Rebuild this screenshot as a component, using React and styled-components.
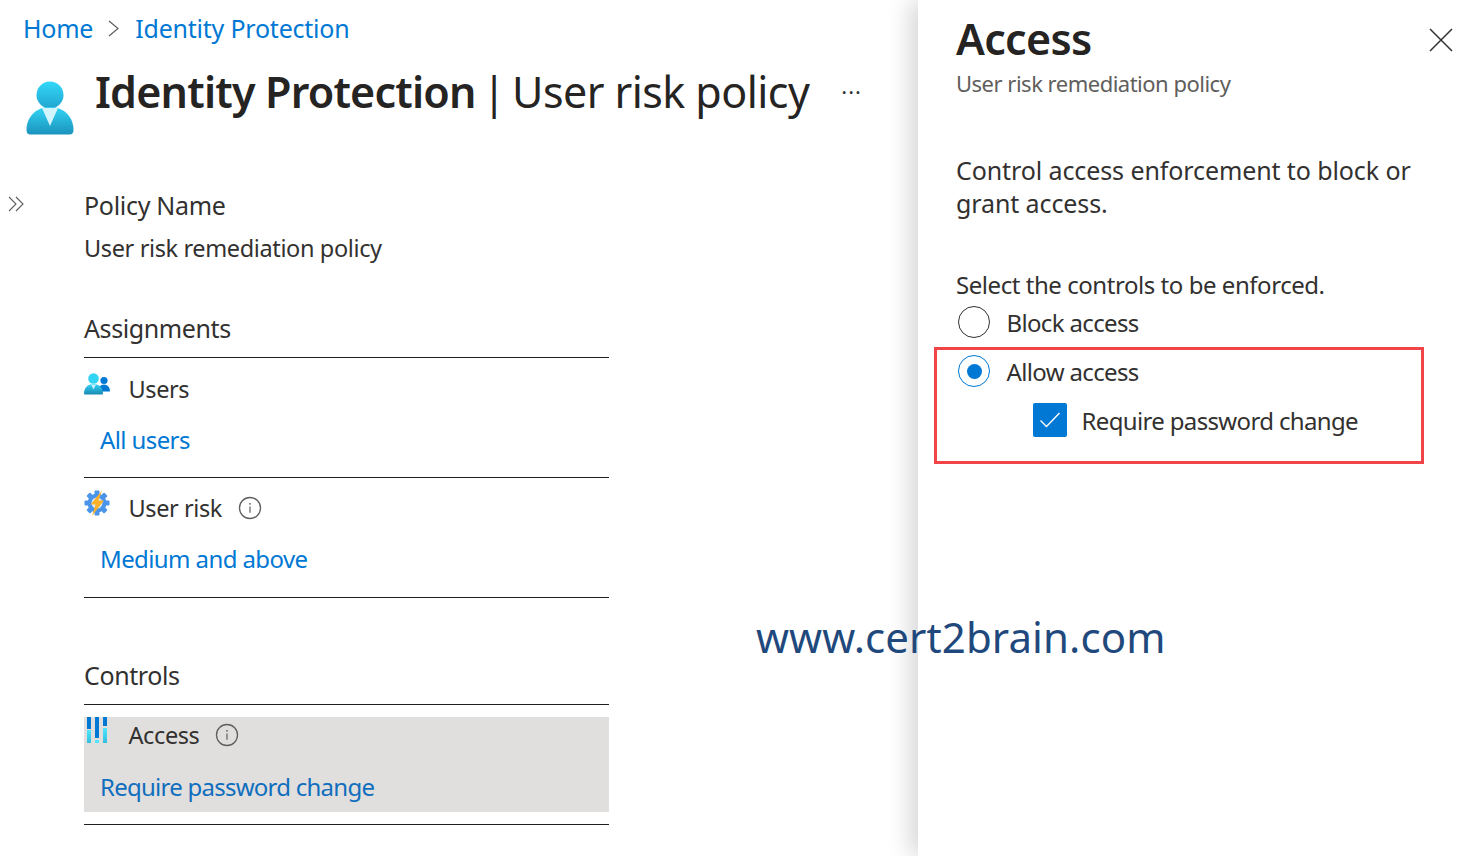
import React from 'react'
import styled, { createGlobalStyle } from 'styled-components'

const Global = createGlobalStyle`
  html, body {
    margin: 0;
    padding: 0;
    height: 100%;
    overflow: hidden;
    background: #fff;
    font-family: "Noto Sans", "Open Sans", sans-serif;
    color: #323130;
  }
`

const Page = styled.div`
  position: relative;
  display: flex;
  width: 1479px;
  height: 856px;
  overflow: hidden;
`

const Main = styled.div`
  width: 918px;
  flex: none;
  padding-top: 11px;
  box-sizing: border-box;
`

const Crumbs = styled.nav`
  display: flex;
  align-items: center;
  height: 34px;
  padding-left: 23px;
  gap: 14px;
`

const Crumb = styled.span`
  font-size: 25px;
  color: #0078d4;
  letter-spacing: -0.22px;
`

const Header = styled.header`
  display: flex;
  align-items: flex-start;
  height: 143px;
  padding: 17px 0 0 26px;
  box-sizing: border-box;
`

const HeaderIcon = styled.svg`
  width: 48px;
  height: 54px;
  margin-top: 19px;
  flex: none;
`

const Title = styled.h1`
  margin: 0 0 0 21px;
  font-size: 43px;
  line-height: 60px;
  font-weight: 400;
  color: #252423;
  letter-spacing: -0.55px;
  white-space: nowrap;
  b {
    font-weight: 600;
    letter-spacing: -0.8px;
  }
`

const TitleSep = styled.span`
  word-spacing: -4px;
`

const More = styled.span`
  margin: 12px 0 0 32px;
  font-size: 22px;
  line-height: 34px;
  letter-spacing: 1px;
  color: #323130;
`

const Body = styled.div`
  display: flex;
`

const Rail = styled.div`
  width: 84px;
  flex: none;
  padding: 7px 0 0 8px;
  box-sizing: border-box;
`

const Content = styled.div`
  width: 525px;
`

const PolicyBlock = styled.div`
  height: 123px;
`

const Label = styled.div`
  font-size: 25px;
  line-height: 34px;
  color: #323130;
  letter-spacing: -0.3px;
`

const Value = styled.div`
  margin-top: 9px;
  font-size: 23.5px;
  line-height: 34px;
  color: #323130;
  letter-spacing: -0.37px;
`

const SectionTitle = styled.div`
  height: 46px;
  font-size: 25px;
  line-height: 34px;
  color: #323130;
  letter-spacing: -0.4px;
  border-bottom: 1px solid #201f1e;
  margin-top: ${(p) => p.$top || 0}px;
`

const Row = styled.div`
  display: flow-root;
  height: 119px;
  border-bottom: 1px solid #201f1e;
`

const RowInner = styled.div`
  padding-top: ${(p) => p.$padTop}px;
  height: ${(p) => p.$height}px;
  background: ${(p) => (p.$selected ? '#e1dfdd' : 'transparent')};
  margin-top: ${(p) => (p.$selected ? 12 : 0)}px;
  box-sizing: border-box;
`

const RowHead = styled.div`
  display: flex;
  align-items: center;
  height: 34px;
`

const RowIcon = styled.svg`
  width: 28px;
  height: 30px;
  flex: none;
  margin-top: -6px;
`

const RowLabel = styled.span`
  margin-left: 16.5px;
  font-size: 23.5px;
  color: #323130;
  letter-spacing: -0.4px;
`

const InfoIcon = styled.svg`
  width: 24px;
  height: 24px;
  margin-left: 16px;
  flex: none;
`

const RowLink = styled.div`
  margin: ${(p) => p.$gap}px 0 0 16px;
  font-size: 24px;
  line-height: 34px;
  letter-spacing: ${(p) => (p.$selected ? -0.75 : -0.6)}px;
  color: ${(p) => (p.$selected ? '#106ebe' : '#0078d4')};
`

const Panel = styled.aside`
  flex: 1;
  position: relative;
  padding: 13px 0 0 38px;
  background: #fff;
  box-shadow: -8px 0 22px rgba(0, 0, 0, 0.16);
  box-sizing: border-box;
`

const PanelHead = styled.div`
  display: flex;
  justify-content: space-between;
  align-items: flex-start;
  padding-right: 25px;
`

const PanelTitle = styled.h2`
  margin: 0;
  font-size: 43px;
  line-height: 52px;
  font-weight: 600;
  color: #252423;
  letter-spacing: -0.7px;
`

const CloseIcon = styled.svg`
  width: 26px;
  height: 26px;
  margin-top: 14px;
`

const Subtitle = styled.div`
  margin-top: 1px;
  font-size: 22px;
  line-height: 34px;
  color: #605e5c;
  letter-spacing: -0.5px;
`

const Intro = styled.p`
  margin: 54px 0 0;
  width: 490px;
  font-size: 25px;
  line-height: 33px;
  letter-spacing: -0.1px;
  color: #323130;
`

const Prompt = styled.div`
  margin-top: 48px;
  font-size: 24px;
  line-height: 34px;
  letter-spacing: -0.45px;
  color: #323130;
`

const Option = styled.div`
  display: flex;
  align-items: center;
  height: 34px;
  margin-left: ${(p) => p.$indent || 2}px;
  margin-top: ${(p) => p.$top || 0}px;
`

const Radio = styled.span`
  width: 32px;
  height: 32px;
  border-radius: 50%;
  box-sizing: border-box;
  border: 1px solid ${(p) => (p.$on ? '#0078d4' : '#323130')};
  display: flex;
  align-items: center;
  justify-content: center;
  flex: none;
  &::after {
    content: '';
    display: ${(p) => (p.$on ? 'block' : 'none')};
    width: 15px;
    height: 15px;
    border-radius: 50%;
    background: #0078d4;
  }
`

const Check = styled.span`
  width: 34px;
  height: 34px;
  border-radius: 2px;
  background: #0078d4;
  display: flex;
  align-items: center;
  justify-content: center;
  flex: none;
`

const OptionLabel = styled.span`
  margin-left: ${(p) => p.$gap || 16.5}px;
  font-size: 24px;
  letter-spacing: -0.65px;
  color: #323130;
  white-space: nowrap;
`

const Highlight = styled.div`
  margin: 8px 0 0 -22px;
  width: 490px;
  height: 117px;
  padding: 4px 0 0 19px;
  border: 3px solid #f04448;
  box-sizing: border-box;
`

const Watermark = styled.div`
  position: absolute;
  left: 756px;
  top: 609px;
  font-size: 42px;
  line-height: 56px;
  letter-spacing: 0.1px;
  color: #1f497d;
  white-space: nowrap;
`

const gearTeeth = [0, 45, 90, 135, 180, 225, 270, 315]

const Info = () => (
  <InfoIcon viewBox="0 0 24 24" fill="none">
    <circle cx="12" cy="12" r="10.5" stroke="#605e5c" strokeWidth="1.3" />
    <path d="M12 10.6v6.2" stroke="#605e5c" strokeWidth="1.2" />
    <circle cx="12" cy="7.8" r="0.9" fill="#605e5c" />
  </InfoIcon>
)

const UsersIcon = () => (
  <RowIcon viewBox="0 0 28 30">
    <defs>
      <linearGradient id="usersGrad" x1="0" y1="0" x2="0" y2="1">
        <stop offset="0" stopColor="#32d4f5" />
        <stop offset="1" stopColor="#198ab3" />
      </linearGradient>
    </defs>
    <circle cx="20" cy="9.500" r="3.600" fill="#0078d4" />
    <path d="M14 20.500c0-4 2.400-7 6-7s6 3 6 7z" fill="#0078d4" />
    <circle cx="9.500" cy="7.500" r="5.300" fill="#32d4f5" />
    <path d="M0 22.500c0-5.500 3.600-9.500 9.500-9.500s9.500 4 9.500 9.500c0 .6-.4 1-1 1H1c-.6 0-1-.4-1-1z" fill="url(#usersGrad)" />
    <path d="M7 13.500l2.500 5 2.500-5z" fill="#c3f1ff" />
  </RowIcon>
)

const RiskIcon = () => (
  <RowIcon viewBox="0 0 28 30">
    <circle cx="13" cy="13" r="9.500" fill="#4a94ea" />
    {gearTeeth.map((deg) => (
      <rect key={deg} x="10.500" y="0.500" width="5" height="5" rx="1" fill="#4a94ea" transform={`rotate(${deg} 13 13)`} />
    ))}
    <circle cx="13" cy="13" r="5.500" fill="#dcecfb" />
    <path d="M18 0.500L6.500 14.500h5L8 26 20 10.500h-5.500l3.500-10z" fill="#fbb12a" />
  </RowIcon>
)

const AccessIcon = () => (
  <RowIcon viewBox="0 0 28 30">
    <defs>
      <linearGradient id="barGrad" x1="0" y1="0" x2="0" y2="1">
        <stop offset="0" stopColor="#50e6ff" />
        <stop offset="1" stopColor="#32bedd" />
      </linearGradient>
    </defs>
    <rect x="3" y="0" width="4" height="12" fill="#0078d4" />
    <rect x="3" y="13" width="4" height="13" fill="url(#barGrad)" />
    <rect x="11" y="0" width="4" height="21" fill="#0078d4" />
    <rect x="11" y="23" width="4" height="3" fill="#50e6ff" />
    <rect x="19" y="0" width="4" height="9" fill="#0078d4" />
    <rect x="19" y="11" width="4" height="15" fill="url(#barGrad)" />
  </RowIcon>
)

export default function App() {
  return (
    <Page>
      <Global />
      <Main>
        <Crumbs>
          <Crumb>Home</Crumb>
          <svg width="14" height="20" viewBox="0 0 14 20" fill="none">
            <path d="M2 3l9 7.500-9 7.500" stroke="#605e5c" strokeWidth="1.200" />
          </svg>
          <Crumb>Identity Protection</Crumb>
        </Crumbs>
        <Header>
          <HeaderIcon viewBox="0 0 48 54">
            <defs>
              <linearGradient id="headGrad" x1="0" y1="0" x2="0" y2="1">
                <stop offset="0" stopColor="#32d8f8" />
                <stop offset="1" stopColor="#22a5cf" />
              </linearGradient>
              <linearGradient id="bodyGrad" x1="0" y1="0" x2="0" y2="1">
                <stop offset="0" stopColor="#32d4f5" />
                <stop offset="1" stopColor="#1b93bd" />
              </linearGradient>
            </defs>
            <circle cx="24" cy="14" r="13.500" fill="url(#headGrad)" />
            <path d="M0.500 49C0.500 37 9 26 24 26s23.500 11 23.500 23c0 3-1.500 4.500-4 4.500H4.500C2 53.500 0.500 52 0.500 49z" fill="url(#bodyGrad)" />
            <path d="M16 27h16l-8 18z" fill="#d2f4fd" />
          </HeaderIcon>
          <Title>
            <b>Identity Protection</b>
            <TitleSep>{' | '}</TitleSep>
            User risk policy
          </Title>
          <More>···</More>
        </Header>
        <Body>
          <Rail>
            <svg width="17" height="16" viewBox="0 0 17 16" fill="none">
              <path d="M1 1l7 7-7 7M8 1l7 7-7 7" stroke="#605e5c" strokeWidth="1.100" />
            </svg>
          </Rail>
          <Content>
            <PolicyBlock>
              <Label>Policy Name</Label>
              <Value>User risk remediation policy</Value>
            </PolicyBlock>
            <SectionTitle>Assignments</SectionTitle>
            <Row>
              <RowInner $padTop={14} $height={119}>
                <RowHead>
                  <UsersIcon />
                  <RowLabel>Users</RowLabel>
                </RowHead>
                <RowLink $gap={17}>All users</RowLink>
              </RowInner>
            </Row>
            <Row>
              <RowInner $padTop={13} $height={119}>
                <RowHead>
                  <RiskIcon />
                  <RowLabel>User risk</RowLabel>
                  <Info />
                </RowHead>
                <RowLink $gap={17}>Medium and above</RowLink>
              </RowInner>
            </Row>
            <SectionTitle $top={60}>Controls</SectionTitle>
            <Row>
              <RowInner $selected $padTop={1} $height={95}>
                <RowHead>
                  <AccessIcon />
                  <RowLabel>Access</RowLabel>
                  <Info />
                </RowHead>
                <RowLink $selected $gap={18}>Require password change</RowLink>
              </RowInner>
            </Row>
          </Content>
        </Body>
      </Main>
      <Panel>
        <PanelHead>
          <PanelTitle>Access</PanelTitle>
          <CloseIcon viewBox="0 0 26 26" fill="none">
            <path d="M2 2l22 22M24 2L2 24" stroke="#323130" strokeWidth="1.500" />
          </CloseIcon>
        </PanelHead>
        <Subtitle>User risk remediation policy</Subtitle>
        <Intro>Control access enforcement to block or grant access.</Intro>
        <Prompt>Select the controls to be enforced.</Prompt>
        <Option $top={3}>
          <Radio />
          <OptionLabel>Block access</OptionLabel>
        </Option>
        <Highlight>
          <Option>
            <Radio $on />
            <OptionLabel>Allow access</OptionLabel>
          </Option>
          <Option $indent={77} $top={15}>
            <Check>
              <svg width="22" height="18" viewBox="0 0 22 18" fill="none">
                <path d="M1.500 9.500l6 6L20.500 2" stroke="#fff" strokeWidth="1.400" />
              </svg>
            </Check>
            <OptionLabel $gap={14.5}>Require password change</OptionLabel>
          </Option>
        </Highlight>
      </Panel>
      <Watermark>www.cert2brain.com</Watermark>
    </Page>
  )
}
